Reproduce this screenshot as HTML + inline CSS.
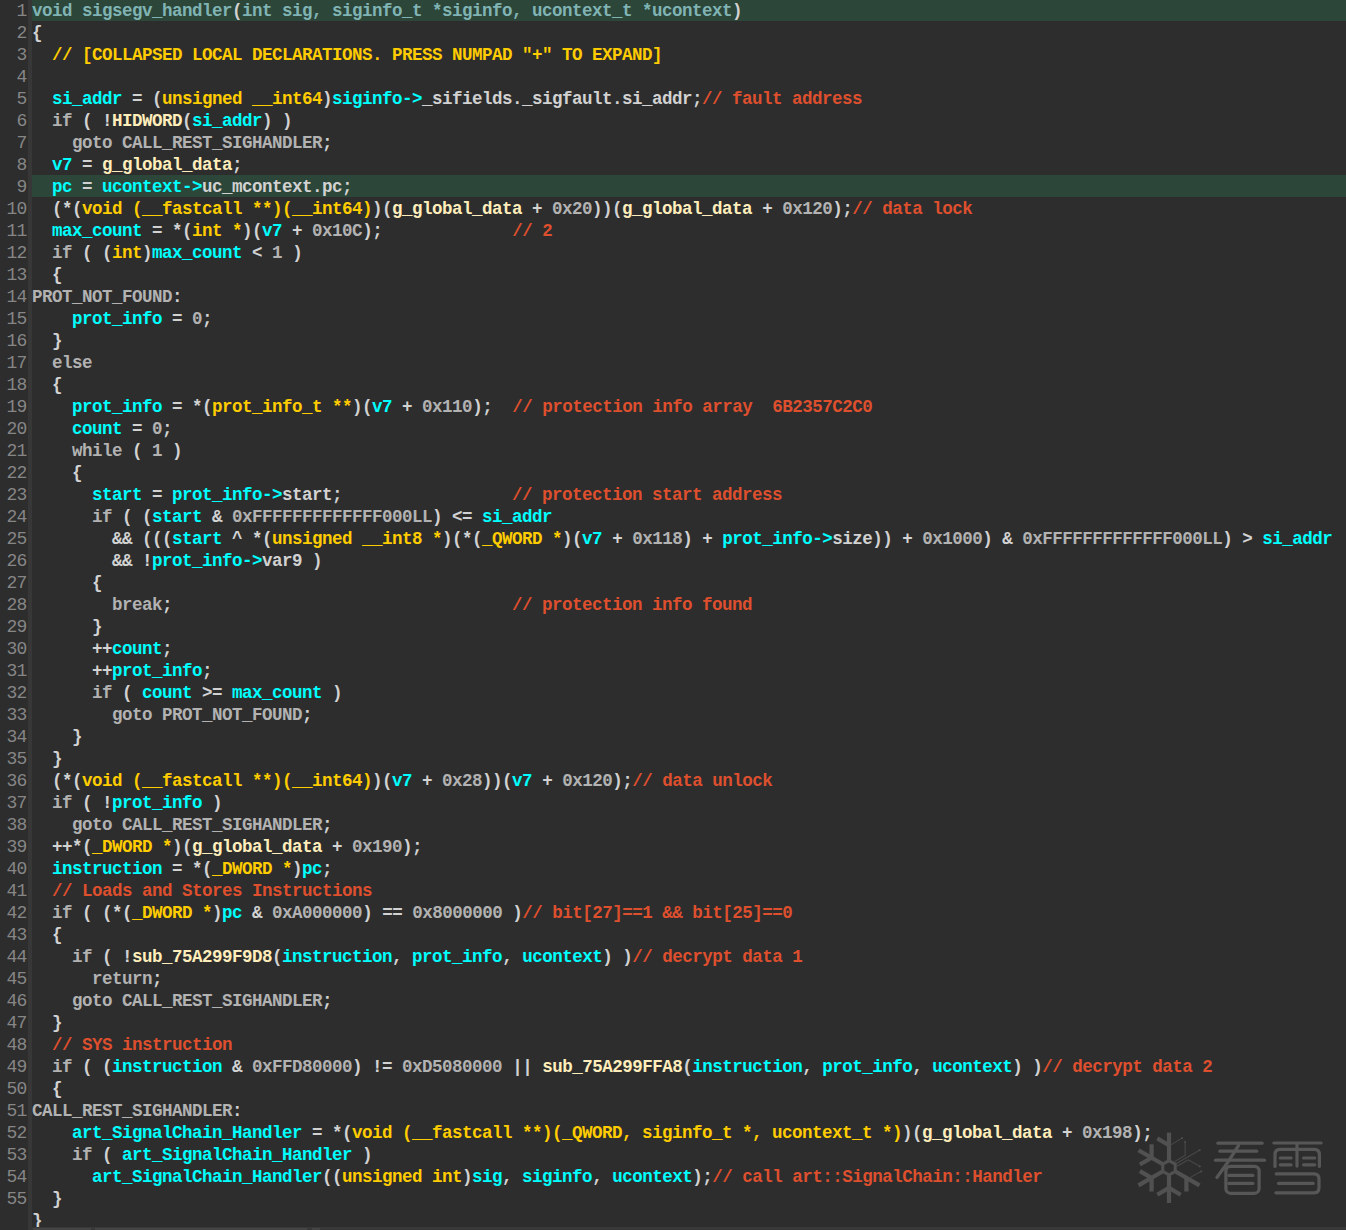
<!DOCTYPE html>
<html><head><meta charset="utf-8"><title>code</title>
<style>
html,body{margin:0;padding:0;}
body{width:1346px;height:1230px;overflow:hidden;background:#2d2d2d;position:relative;
 font-family:"Liberation Mono",monospace;font-weight:bold;font-size:17.5px;letter-spacing:-0.5017px;color:#d2d2d2;}
#sep{position:absolute;left:28px;top:0;width:4px;height:1230px;background:#373737;}
#code{position:absolute;left:0;top:-1px;width:1346px;}
.l{position:relative;height:22px;line-height:22px;white-space:pre;}
.l.h:before{content:"";position:absolute;left:32px;right:0;top:0;height:22px;background:#2c4639;}
.n{position:absolute;left:0;top:1px;width:26.6px;text-align:right;color:#868686;font-weight:normal;font-size:18px;letter-spacing:-0.8px;}
.t{position:absolute;left:32px;top:1px;}
b{font-weight:bold;}
.k{color:#b2b2b2}.c{color:#00ffff}.y{color:#ffcc00}.w{color:#ffeebb}.r{color:#de4f2e}
.e{color:#80b4b4}
#sb{position:absolute;left:32px;top:1227px;width:1314px;height:3px;background:#383838;}
#sb i{position:absolute;top:1.4px;height:2px;background:#444;}
</style></head>
<body>
<div id="g"></div><div id="sep"></div>
<div id="code">
<div class="l h"><span class="n">1</span><span class="t"><b class="e">void sigsegv_handler</b>(<b class="e">int sig, siginfo_t *siginfo, ucontext_t *ucontext</b>)</span></div>
<div class="l"><span class="n">2</span><span class="t">{</span></div>
<div class="l"><span class="n">3</span><span class="t">  <b class="y">// [COLLAPSED LOCAL DECLARATIONS. PRESS NUMPAD "+" TO EXPAND]</b></span></div>
<div class="l"><span class="n">4</span><span class="t"></span></div>
<div class="l"><span class="n">5</span><span class="t">  <b class="c">si_addr</b> = (<b class="y">unsigned __int64</b>)<b class="c">siginfo-&gt;</b>_sifields._sigfault.si_addr;<b class="r">// fault address</b></span></div>
<div class="l"><span class="n">6</span><span class="t">  <b class="k">if</b> ( !<b class="w">HIDWORD</b>(<b class="c">si_addr</b>) )</span></div>
<div class="l"><span class="n">7</span><span class="t">    <b class="k">goto</b> <b class="k">CALL_REST_SIGHANDLER</b>;</span></div>
<div class="l"><span class="n">8</span><span class="t">  <b class="c">v7</b> = <b class="w">g_global_data</b>;</span></div>
<div class="l h"><span class="n">9</span><span class="t">  <b class="c">pc</b> = <b class="c">ucontext-&gt;</b>uc_mcontext.pc;</span></div>
<div class="l"><span class="n">10</span><span class="t">  (*(<b class="y">void (__fastcall **)(__int64)</b>)(<b class="w">g_global_data</b> + <b class="k">0x20</b>))(<b class="w">g_global_data</b> + <b class="k">0x120</b>);<b class="r">// data lock</b></span></div>
<div class="l"><span class="n">11</span><span class="t">  <b class="c">max_count</b> = *(<b class="y">int *</b>)(<b class="c">v7</b> + <b class="k">0x10C</b>);             <b class="r">// 2</b></span></div>
<div class="l"><span class="n">12</span><span class="t">  <b class="k">if</b> ( (<b class="y">int</b>)<b class="c">max_count</b> &lt; <b class="k">1</b> )</span></div>
<div class="l"><span class="n">13</span><span class="t">  {</span></div>
<div class="l"><span class="n">14</span><span class="t"><b class="k">PROT_NOT_FOUND</b>:</span></div>
<div class="l"><span class="n">15</span><span class="t">    <b class="c">prot_info</b> = <b class="k">0</b>;</span></div>
<div class="l"><span class="n">16</span><span class="t">  }</span></div>
<div class="l"><span class="n">17</span><span class="t">  <b class="k">else</b></span></div>
<div class="l"><span class="n">18</span><span class="t">  {</span></div>
<div class="l"><span class="n">19</span><span class="t">    <b class="c">prot_info</b> = *(<b class="y">prot_info_t **</b>)(<b class="c">v7</b> + <b class="k">0x110</b>);  <b class="r">// protection info array  6B2357C2C0</b></span></div>
<div class="l"><span class="n">20</span><span class="t">    <b class="c">count</b> = <b class="k">0</b>;</span></div>
<div class="l"><span class="n">21</span><span class="t">    <b class="k">while</b> ( <b class="k">1</b> )</span></div>
<div class="l"><span class="n">22</span><span class="t">    {</span></div>
<div class="l"><span class="n">23</span><span class="t">      <b class="c">start</b> = <b class="c">prot_info-&gt;</b>start;                 <b class="r">// protection start address</b></span></div>
<div class="l"><span class="n">24</span><span class="t">      <b class="k">if</b> ( (<b class="c">start</b> &amp; <b class="k">0xFFFFFFFFFFFFF000LL</b>) &lt;= <b class="c">si_addr</b></span></div>
<div class="l"><span class="n">25</span><span class="t">        &amp;&amp; (((<b class="c">start</b> ^ *(<b class="y">unsigned __int8 *</b>)(*(<b class="y">_QWORD *</b>)(<b class="c">v7</b> + <b class="k">0x118</b>) + <b class="c">prot_info-&gt;</b>size)) + <b class="k">0x1000</b>) &amp; <b class="k">0xFFFFFFFFFFFFF000LL</b>) &gt; <b class="c">si_addr</b></span></div>
<div class="l"><span class="n">26</span><span class="t">        &amp;&amp; !<b class="c">prot_info-&gt;</b>var9 )</span></div>
<div class="l"><span class="n">27</span><span class="t">      {</span></div>
<div class="l"><span class="n">28</span><span class="t">        <b class="k">break</b>;                                  <b class="r">// protection info found</b></span></div>
<div class="l"><span class="n">29</span><span class="t">      }</span></div>
<div class="l"><span class="n">30</span><span class="t">      ++<b class="c">count</b>;</span></div>
<div class="l"><span class="n">31</span><span class="t">      ++<b class="c">prot_info</b>;</span></div>
<div class="l"><span class="n">32</span><span class="t">      <b class="k">if</b> ( <b class="c">count</b> &gt;= <b class="c">max_count</b> )</span></div>
<div class="l"><span class="n">33</span><span class="t">        <b class="k">goto</b> <b class="k">PROT_NOT_FOUND</b>;</span></div>
<div class="l"><span class="n">34</span><span class="t">    }</span></div>
<div class="l"><span class="n">35</span><span class="t">  }</span></div>
<div class="l"><span class="n">36</span><span class="t">  (*(<b class="y">void (__fastcall **)(__int64)</b>)(<b class="c">v7</b> + <b class="k">0x28</b>))(<b class="c">v7</b> + <b class="k">0x120</b>);<b class="r">// data unlock</b></span></div>
<div class="l"><span class="n">37</span><span class="t">  <b class="k">if</b> ( !<b class="c">prot_info</b> )</span></div>
<div class="l"><span class="n">38</span><span class="t">    <b class="k">goto</b> <b class="k">CALL_REST_SIGHANDLER</b>;</span></div>
<div class="l"><span class="n">39</span><span class="t">  ++*(<b class="y">_DWORD *</b>)(<b class="w">g_global_data</b> + <b class="k">0x190</b>);</span></div>
<div class="l"><span class="n">40</span><span class="t">  <b class="c">instruction</b> = *(<b class="y">_DWORD *</b>)<b class="c">pc</b>;</span></div>
<div class="l"><span class="n">41</span><span class="t">  <b class="r">// Loads and Stores Instructions</b></span></div>
<div class="l"><span class="n">42</span><span class="t">  <b class="k">if</b> ( (*(<b class="y">_DWORD *</b>)<b class="c">pc</b> &amp; <b class="k">0xA000000</b>) == <b class="k">0x8000000</b> )<b class="r">// bit[27]==1 &amp;&amp; bit[25]==0</b></span></div>
<div class="l"><span class="n">43</span><span class="t">  {</span></div>
<div class="l"><span class="n">44</span><span class="t">    <b class="k">if</b> ( !<b class="w">sub_75A299F9D8</b>(<b class="c">instruction</b>, <b class="c">prot_info</b>, <b class="c">ucontext</b>) )<b class="r">// decrypt data 1</b></span></div>
<div class="l"><span class="n">45</span><span class="t">      <b class="k">return</b>;</span></div>
<div class="l"><span class="n">46</span><span class="t">    <b class="k">goto</b> <b class="k">CALL_REST_SIGHANDLER</b>;</span></div>
<div class="l"><span class="n">47</span><span class="t">  }</span></div>
<div class="l"><span class="n">48</span><span class="t">  <b class="r">// SYS instruction</b></span></div>
<div class="l"><span class="n">49</span><span class="t">  <b class="k">if</b> ( (<b class="c">instruction</b> &amp; <b class="k">0xFFD80000</b>) != <b class="k">0xD5080000</b> || <b class="w">sub_75A299FFA8</b>(<b class="c">instruction</b>, <b class="c">prot_info</b>, <b class="c">ucontext</b>) )<b class="r">// decrypt data 2</b></span></div>
<div class="l"><span class="n">50</span><span class="t">  {</span></div>
<div class="l"><span class="n">51</span><span class="t"><b class="k">CALL_REST_SIGHANDLER</b>:</span></div>
<div class="l"><span class="n">52</span><span class="t">    <b class="c">art_SignalChain_Handler</b> = *(<b class="y">void (__fastcall **)(_QWORD, siginfo_t *, ucontext_t *)</b>)(<b class="w">g_global_data</b> + <b class="k">0x198</b>);</span></div>
<div class="l"><span class="n">53</span><span class="t">    <b class="k">if</b> ( <b class="c">art_SignalChain_Handler</b> )</span></div>
<div class="l"><span class="n">54</span><span class="t">      <b class="c">art_SignalChain_Handler</b>((<b class="y">unsigned int</b>)<b class="c">sig</b>, <b class="c">siginfo</b>, <b class="c">ucontext</b>);<b class="r">// call art::SignalChain::Handler</b></span></div>
<div class="l"><span class="n">55</span><span class="t">  }</span></div>
<div class="l"><span class="n"></span><span class="t">}</span></div>
</div>
<svg id="wm" width="216" height="90" viewBox="1130 1125 216 90" style="position:absolute;left:1130px;top:1125px"><g transform="translate(1169.0 1167.8)" fill="none"><polygon points="0.00,-7.20 6.24,-3.60 6.24,3.60 0.00,7.20 -6.24,3.60 -6.24,-3.60" stroke="#515151" stroke-width="3" stroke-linejoin="miter"/><g transform="rotate(0)"><path d="M0 -7.5V-35.2" stroke="#515151" stroke-width="4.2" stroke-linecap="butt"/><path d="M0 -22.6L-11.7 -29.4" stroke="#515151" stroke-width="4.2" stroke-linecap="butt"/><path d="M1.5 -22.8L13.0 -29.6" stroke="#4b4b4b" stroke-width="1" stroke-linecap="round"/><circle cx="13.0" cy="-29.6" r="1.1" fill="#4b4b4b"/></g><g transform="rotate(120)"><path d="M0 -7.5V-35.2" stroke="#515151" stroke-width="4.2" stroke-linecap="butt"/><path d="M-1.5 -22.8L-13.0 -29.6" stroke="#4b4b4b" stroke-width="1" stroke-linecap="round"/><circle cx="-13.0" cy="-29.6" r="1.1" fill="#4b4b4b"/><path d="M0 -20.1L11.7 -26.9" stroke="#515151" stroke-width="4.2" stroke-linecap="butt"/></g><g transform="rotate(180)"><path d="M0 -7.5V-35.2" stroke="#515151" stroke-width="4.2" stroke-linecap="butt"/><path d="M0 -20.1L-11.7 -26.9" stroke="#515151" stroke-width="4.2" stroke-linecap="butt"/><path d="M0 -20.1L11.7 -26.9" stroke="#515151" stroke-width="4.2" stroke-linecap="butt"/></g><g transform="rotate(240)"><path d="M0 -7.5V-35.2" stroke="#515151" stroke-width="4.2" stroke-linecap="butt"/><path d="M0 -20.1L-11.7 -26.9" stroke="#515151" stroke-width="4.2" stroke-linecap="butt"/><path d="M0 -20.1L11.7 -26.9" stroke="#515151" stroke-width="4.2" stroke-linecap="butt"/></g><g transform="rotate(300)"><path d="M0 -7.5V-35.2" stroke="#515151" stroke-width="4.2" stroke-linecap="butt"/><path d="M0 -20.1L-11.7 -26.9" stroke="#515151" stroke-width="4.2" stroke-linecap="butt"/><path d="M0 -20.1L11.7 -26.9" stroke="#515151" stroke-width="4.2" stroke-linecap="butt"/></g><g transform="rotate(60)" stroke="#4b4b4b" stroke-width="1" stroke-linecap="round"><path d="M-2.7 -8.2V-20.2L-14.4 -26.9"/><path d="M0 -8.5V-35.4"/><path d="M2.7 -8.2V-20.8L14.2 -27.4"/><circle cx="-14.4" cy="-26.9" r="1.1" fill="#4b4b4b" stroke="none"/><circle cx="0" cy="-35.4" r="1.1" fill="#4b4b4b" stroke="none"/><circle cx="14.2" cy="-27.4" r="1.1" fill="#4b4b4b" stroke="none"/></g></g><g fill="none" stroke="#575757" stroke-width="3.2" stroke-linecap="round" stroke-linejoin="round"><path d="M1217.9 1143.2H1262.1"/><path d="M1219.9 1151.2H1256.7"/><path d="M1215.5 1160.2H1264.5"/><path d="M1238.6 1145.4Q1228 1163 1216.9 1177.5"/><rect x="1225.9" y="1166.4" width="33.2" height="26.9" rx="4.6" ry="4.6"/><path d="M1228.9 1175.4H1252.9"/><path d="M1228.9 1183.4H1252.9"/><path d="M1273.9 1143.0H1321.1"/><path d="M1297 1143.5V1166.1"/><path d="M1275 1166.5V1154.6Q1275 1149.4 1280.2 1149.4H1314.2Q1319.4 1149.4 1319.4 1154.6V1166.5"/><path d="M1280.3 1158.0H1291.1"/><path d="M1303.5 1158.0H1314.7"/><path d="M1280.3 1164.8H1291.1"/><path d="M1303.5 1164.8H1314.7"/><path d="M1276.3 1173.9H1314Q1319 1173.9 1319 1178.9V1187.8Q1319 1192.8 1314 1192.8H1275.9"/><path d="M1278.5 1183.4H1313.1"/></g></svg>
<div id="sb"><i style="left:1px;width:58px"></i><i style="left:63px;width:212px"></i><i style="left:279.5px;width:8px"></i></div>
</body></html>
